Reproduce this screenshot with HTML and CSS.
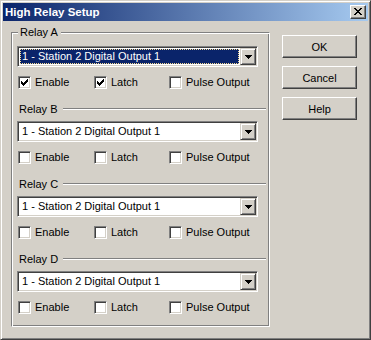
FILE: index.html
```html
<!DOCTYPE html>
<html lang="en">
<head>
    <meta charset="UTF-8">
    <title>High Relay Setup</title>
    <link rel="stylesheet" href="styles.css">
</head>
<body>
    <div class="window">
        <div class="titlebar">
            <span class="title">High Relay Setup</span>
            <div class="close">
                <svg width="8" height="7" viewBox="0 0 8 7" shape-rendering="crispEdges"><path d="M0 0h2v1H0zM6 0h2v1H6zM1 1h2v1H1zM5 1h2v1H5zM2 2h4v1H2zM3 3h2v1H3zM2 4h4v1H2zM1 5h2v1H1zM5 5h2v1H5zM0 6h2v1H0zM6 6h2v1H6z"/></svg>
            </div>
        </div>
        <div class="content">
            <div class="group">
                <div class="group-title">Relay A</div>
                <div class="combo first">
                    <div class="combo-value selected"><span>1 - Station 2 Digital Output 1</span></div>
                    <div class="combo-btn"><svg width="7" height="4" viewBox="0 0 7 4" shape-rendering="crispEdges"><path d="M0 0h7v1H0zM1 1h5v1H1zM2 2h3v1H2zM3 3h1v1H3z"/></svg></div>
                </div>
                <div class="checks">
                    <label class="check enable"><span class="box"><svg width="9" height="9" viewBox="0 0 9 9" shape-rendering="crispEdges"><path d="M1 3h1v3H1zM2 4h1v3H2zM3 5h1v3H3zM4 4h1v3H4zM5 3h1v3H5zM6 2h1v3H6zM7 1h1v3H7z"/></svg></span>Enable</label>
                    <label class="check latch"><span class="box"><svg width="9" height="9" viewBox="0 0 9 9" shape-rendering="crispEdges"><path d="M1 3h1v3H1zM2 4h1v3H2zM3 5h1v3H3zM4 4h1v3H4zM5 3h1v3H5zM6 2h1v3H6zM7 1h1v3H7z"/></svg></span>Latch</label>
                    <label class="check"><span class="box"></span>Pulse Output</label>
                </div>

                <div class="relay-head"><span>Relay B</span><span class="rule"></span></div>
                <div class="combo">
                    <div class="combo-value"><span>1 - Station 2 Digital Output 1</span></div>
                    <div class="combo-btn"><svg width="7" height="4" viewBox="0 0 7 4" shape-rendering="crispEdges"><path d="M0 0h7v1H0zM1 1h5v1H1zM2 2h3v1H2zM3 3h1v1H3z"/></svg></div>
                </div>
                <div class="checks">
                    <label class="check enable"><span class="box"></span>Enable</label>
                    <label class="check latch"><span class="box"></span>Latch</label>
                    <label class="check"><span class="box"></span>Pulse Output</label>
                </div>

                <div class="relay-head"><span>Relay C</span><span class="rule"></span></div>
                <div class="combo">
                    <div class="combo-value"><span>1 - Station 2 Digital Output 1</span></div>
                    <div class="combo-btn"><svg width="7" height="4" viewBox="0 0 7 4" shape-rendering="crispEdges"><path d="M0 0h7v1H0zM1 1h5v1H1zM2 2h3v1H2zM3 3h1v1H3z"/></svg></div>
                </div>
                <div class="checks">
                    <label class="check enable"><span class="box"></span>Enable</label>
                    <label class="check latch"><span class="box"></span>Latch</label>
                    <label class="check"><span class="box"></span>Pulse Output</label>
                </div>

                <div class="relay-head"><span>Relay D</span><span class="rule"></span></div>
                <div class="combo">
                    <div class="combo-value"><span>1 - Station 2 Digital Output 1</span></div>
                    <div class="combo-btn"><svg width="7" height="4" viewBox="0 0 7 4" shape-rendering="crispEdges"><path d="M0 0h7v1H0zM1 1h5v1H1zM2 2h3v1H2zM3 3h1v1H3z"/></svg></div>
                </div>
                <div class="checks">
                    <label class="check enable"><span class="box"></span>Enable</label>
                    <label class="check latch"><span class="box"></span>Latch</label>
                    <label class="check"><span class="box"></span>Pulse Output</label>
                </div>
            </div>
            <div class="buttons">
                <div class="button">OK</div>
                <div class="button">Cancel</div>
                <div class="button">Help</div>
            </div>
        </div>
    </div>
</body>
</html>
```

FILE: styles.css
```css
body {
    margin: 0;
    background-color: #d4d0c8;
    font-family: 'Liberation Sans', Arial, sans-serif;
    font-size: 11px;
    color: #000;
}
.window {
    width: 371px;
    height: 340px;
    box-sizing: border-box;
    padding: 2px;
    border: 1px solid;
    border-color: #d4d0c8 #404040 #404040 #d4d0c8;
    box-shadow: inset 1px 1px 0 #fff, inset -1px -1px 0 #808080;
    background-color: #d4d0c8;
}
/* title bar */
.titlebar {
    height: 18px;
    display: flex;
    align-items: center;
    justify-content: space-between;
    padding: 0 2px;
    background: linear-gradient(to right, #0a246a, #a6caf0);
}
.title {
    color: #fff;
    font-weight: bold;
    font-size: 11.5px;
    line-height: 18px;
}
.close {
    width: 16px;
    height: 14px;
    box-sizing: border-box;
    border: 1px solid;
    border-color: #fff #404040 #404040 #fff;
    box-shadow: inset -1px -1px 0 #808080;
    background-color: #d4d0c8;
    display: flex;
    align-items: center;
    justify-content: center;
    padding-bottom: 1px;
}
/* dialog body */
.content {
    display: flex;
    padding-left: 8px;
}
.group {
    width: 259px;
    height: 295px;
    margin-top: 11px;
    box-sizing: border-box;
    border: 1px solid;
    border-color: #808080 #fff #fff #808080;
    box-shadow: inset 1px 1px 0 #fff, inset -1px -1px 0 #808080;
    padding: 0 3px 0 5px;
    display: flex;
    flex-direction: column;
}
.group-title {
    align-self: flex-start;
    margin: -7px 0 0 1px;
    padding: 0 3px 0 2px;
    line-height: 13px;
    background-color: #d4d0c8;
}
.relay-head {
    display: flex;
    align-items: center;
    height: 13px;
    margin: 13px 0 0 2px;
}
.relay-head .rule {
    flex: 1;
    margin-left: 5px;
    border-top: 1px solid #808080;
    border-bottom: 1px solid #fff;
}
/* combo box */
.combo {
    width: 241px;
    height: 21px;
    box-sizing: border-box;
    margin-top: 6px;
    border: 1px solid;
    border-color: #808080 #fff #fff #808080;
    box-shadow: inset 1px 1px 0 #404040, inset -1px -1px 0 #d4d0c8;
    padding: 1px;
    background-color: #fff;
    display: flex;
}
.combo.first {
    margin-top: 7px;
}
.combo-value {
    flex: 1;
    margin: 1px;
    padding-left: 1px;
    line-height: 13px;
    border: 1px solid transparent;
    white-space: nowrap;
    overflow: hidden;
}
.combo-value.selected {
    background-color: #0a246a;
    color: #fff;
    border: 1px dotted #f5db95;
}
.combo-btn {
    width: 16px;
    box-sizing: border-box;
    border: 1px solid;
    border-color: #d4d0c8 #404040 #404040 #d4d0c8;
    box-shadow: inset 1px 1px 0 #fff, inset -1px -1px 0 #808080;
    background-color: #d4d0c8;
    display: flex;
    align-items: center;
    justify-content: center;
    padding-top: 1px;
}
/* check boxes */
.checks {
    display: flex;
    margin: 9px 0 0 1px;
    height: 13px;
}
.check {
    display: flex;
    align-items: center;
    line-height: 13px;
}
.check.enable {
    width: 76px;
}
.check.latch {
    width: 75px;
}
.box {
    width: 13px;
    height: 13px;
    box-sizing: border-box;
    margin-right: 4px;
    border: 1px solid;
    border-color: #808080 #fff #fff #808080;
    box-shadow: inset 1px 1px 0 #404040, inset -1px -1px 0 #d4d0c8;
    background-color: #fff;
    padding: 1px;
}
.box svg {
    display: block;
}
/* push buttons */
.buttons {
    display: flex;
    flex-direction: column;
    gap: 8px;
    margin: 14px 0 0 12px;
}
.button {
    width: 75px;
    height: 23px;
    box-sizing: border-box;
    border: 1px solid;
    border-color: #fff #404040 #404040 #fff;
    box-shadow: inset -1px -1px 0 #808080;
    display: flex;
    align-items: center;
    justify-content: center;
}
```
